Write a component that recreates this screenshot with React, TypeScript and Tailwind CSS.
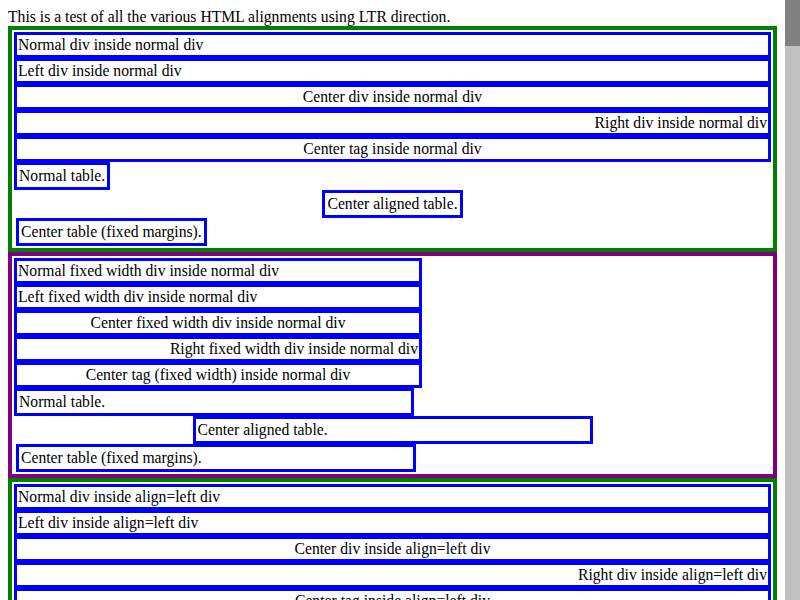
const wrappers = ["normal div", "align=left div", "align=center div", "align=right div"];

function Row({ label, align, fixed }: { label: string; align: string; fixed: boolean }) {
  return (
    <div
      className={`border-[3px] border-[#0000ff] p-px leading-[18px] ${fixed ? "w-[400px] box-content" : ""} ${align}`}
    >
      {label}
    </div>
  );
}

function Table({ label, place, fixed }: { label: string; place: string; fixed: boolean }) {
  return (
    <div
      className={`border-[3px] border-[#0000ff] p-[2px] leading-[18px] ${fixed ? "w-[400px]" : "w-fit"} ${place}`}
    >
      {label}
    </div>
  );
}

function Section({ wrapper, fixed }: { wrapper: string; fixed: boolean }) {
  const fw = fixed ? " fixed width" : "";
  const rows = [
    { label: `Normal${fw} div inside ${wrapper}`, align: "text-left" },
    { label: `Left${fw} div inside ${wrapper}`, align: "text-left" },
    { label: `Center${fw} div inside ${wrapper}`, align: "text-center" },
    { label: `Right${fw} div inside ${wrapper}`, align: "text-right" },
    {
      label: fixed ? `Center tag (fixed width) inside ${wrapper}` : `Center tag inside ${wrapper}`,
      align: "text-center",
    },
  ];

  return (
    <div className={`border-4 p-[2px] ${fixed ? "border-[#800080]" : "border-[#008000]"}`}>
      {rows.map((r) => (
        <Row key={r.label} label={r.label} align={r.align} fixed={fixed} />
      ))}
      <Table label="Normal table." place="" fixed={fixed} />
      <Table label="Center aligned table." place="mx-auto" fixed={fixed} />
      <Table label="Center table (fixed margins)." place="ml-[2px]" fixed={fixed} />
    </div>
  );
}

export default function App() {
  return (
    <div className="flex h-[600px] overflow-hidden bg-white text-black">
      <div className="min-w-0 flex-1 overflow-hidden p-2 text-[15.68px] font-['Liberation_Serif','Times_New_Roman',serif]">
        <div className="leading-[18px]">
          This is a test of all the various HTML alignments using LTR direction.
        </div>
        {wrappers.map((w) => (
          <div key={w}>
            <Section wrapper={w} fixed={false} />
            <Section wrapper={w} fixed={true} />
          </div>
        ))}
      </div>
      {/* page scrollbar */}
      <div className="w-[15px] shrink-0 bg-[#c0c0c0]">
        <div className="h-[46px] bg-[#808080]" />
      </div>
    </div>
  );
}
